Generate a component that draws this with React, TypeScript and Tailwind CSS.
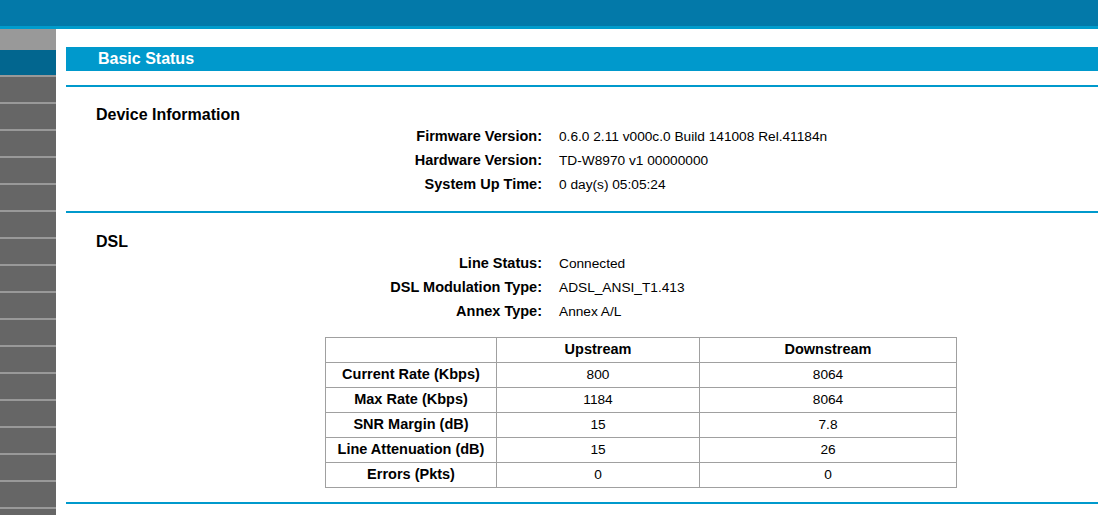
const deviceRows = [
  { label: "Firmware Version:", value: "0.6.0 2.11 v000c.0 Build 141008 Rel.41184n" },
  { label: "Hardware Version:", value: "TD-W8970 v1 00000000" },
  { label: "System Up Time:", value: "0 day(s) 05:05:24" },
];

const dslRows = [
  { label: "Line Status:", value: "Connected" },
  { label: "DSL Modulation Type:", value: "ADSL_ANSI_T1.413" },
  { label: "Annex Type:", value: "Annex A/L" },
];

const stats = [
  { name: "Current Rate (Kbps)", up: "800", down: "8064" },
  { name: "Max Rate (Kbps)", up: "1184", down: "8064" },
  { name: "SNR Margin (dB)", up: "15", down: "7.8" },
  { name: "Line Attenuation (dB)", up: "15", down: "26" },
  { name: "Errors (Pkts)", up: "0", down: "0" },
];

function InfoRow({ label, value }: { label: string; value: string }) {
  return (
    <div className="flex h-[24px] items-center">
      <div className="w-[476px] text-right text-[14.5px] font-bold">{label}</div>
      <div className="pl-[17px] text-[13.7px]">{value}</div>
    </div>
  );
}

function Divider() {
  return <div className="h-[2px] bg-[#0099cc]" />;
}

export default function App() {
  return (
    <div
      className="h-[515px] w-full overflow-hidden bg-white text-black"
      style={{ fontFamily: '"Liberation Sans", Arial, sans-serif' }}
    >
      <div className="h-[26px] bg-[#0379a9]" />
      <div className="h-[3px] bg-[#009ccc]" />
      <div className="flex">
        {/* side menu */}
        <div className="w-[56px] shrink-0">
          <div className="h-[21px] bg-[#999999]" />
          <div className="h-[25px] bg-[#02668f]" />
          {Array.from({ length: 17 }).map((_, i) => (
            <div key={i} className="h-[27px] border-t-2 border-[#999999] bg-[#666666]" />
          ))}
        </div>

        <div className="min-w-0 flex-1 pl-[10px]">
          <div className="mt-[18px] flex h-[24px] items-center bg-[#0099cc] pl-[32px] text-[16px] font-bold text-white">
            Basic Status
          </div>
          <div className="mt-[14px]">
            <Divider />
          </div>

          <div className="pl-[30px] pt-[17px] text-[16px] font-bold leading-[21px]">Device Information</div>
          {deviceRows.map((r) => (
            <InfoRow key={r.label} {...r} />
          ))}
          <div className="mt-[14px]">
            <Divider />
          </div>

          <div className="pl-[30px] pt-[18px] text-[16px] font-bold leading-[21px]">DSL</div>
          {dslRows.map((r) => (
            <InfoRow key={r.label} {...r} />
          ))}

          <table className="ml-[259px] mt-[13px] w-[631px] table-fixed border-collapse text-center">
            <colgroup>
              <col className="w-[171px]" />
              <col className="w-[203px]" />
              <col className="w-[257px]" />
            </colgroup>
            <tbody>
              <tr className="h-[25px]">
                <td className="border border-[#a0a0a0]" />
                <td className="border border-[#a0a0a0] text-[14.5px] font-bold">Upstream</td>
                <td className="border border-[#a0a0a0] text-[14.5px] font-bold">Downstream</td>
              </tr>
              {stats.map((s) => (
                <tr key={s.name} className="h-[25px]">
                  <td className="whitespace-nowrap border border-[#a0a0a0] p-0 text-[14.5px] font-bold">{s.name}</td>
                  <td className="border border-[#a0a0a0] text-[13.7px]">{s.up}</td>
                  <td className="border border-[#a0a0a0] text-[13.7px]">{s.down}</td>
                </tr>
              ))}
            </tbody>
          </table>

          <div className="mt-[14px]">
            <Divider />
          </div>
        </div>
      </div>
    </div>
  );
}
